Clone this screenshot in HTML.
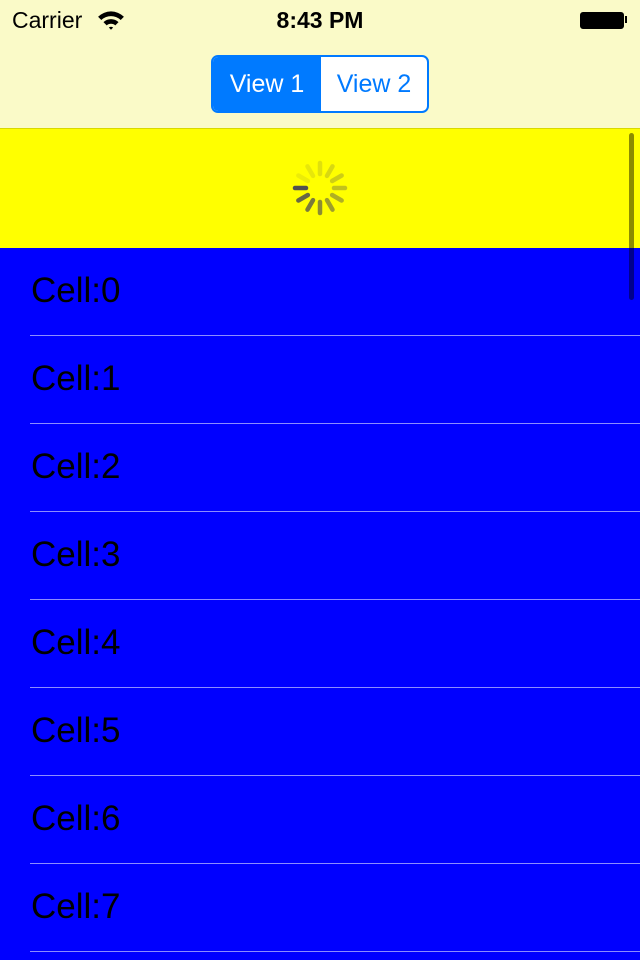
<!DOCTYPE html>
<html><head><style>
body{margin:0;width:640px;height:960px;overflow:hidden;font-family:"Liberation Sans",sans-serif;background:#0000ff;position:relative}
.top{position:absolute;left:0;top:0;width:640px;height:128px;background:#fafac8;border-bottom:1px solid #d8d800}
.seg{position:absolute;left:211px;top:55px;width:214px;height:54px;border:2px solid #007aff;border-radius:7px;background:#fff;overflow:hidden;font-size:25px}
.seg .a{position:absolute;left:0;top:0;width:108px;height:54px;background:#007aff;color:#fff;text-align:center;line-height:54px}
.seg .b{position:absolute;left:108px;top:0;width:106px;height:54px;color:#007aff;text-align:center;line-height:54px}
.yel{position:absolute;left:0;top:129px;width:640px;height:119px;background:#ffff00}
.cell{position:absolute;left:0;width:640px;height:88px}
.cell span{position:absolute;left:31px;top:23px;font-size:35px;color:#000}
.cell i{position:absolute;left:30px;right:0;bottom:0;height:1px;background:#8c8cff}
</style></head><body>
<div class="top">
<div style="position:absolute;left:12px;top:7px;font-size:23px">Carrier</div>
<svg style="position:absolute;left:97px;top:9px" width="28" height="22" viewBox="0 0 26 20"><path d="M1 7 A17 17 0 0 1 25 7 L22 10 A13 13 0 0 0 4 10Z M6 12 A10 10 0 0 1 20 12 L17 15 A6 6 0 0 0 9 15Z M11 17 A3 3 0 0 1 15 17 L13 19Z" fill="#000"/></svg>
<div style="position:absolute;left:0;width:640px;top:7px;text-align:center;font-size:23px;font-weight:bold">8:43 PM</div>
<div style="position:absolute;left:580px;top:12px;width:42px;height:15px;border:1px solid #000;border-radius:3px;background:#000"></div>
<div style="position:absolute;left:625px;top:16px;width:2px;height:7px;background:#000"></div>
<div class="seg"><div class="a">View 1</div><div class="b">View 2</div></div>
</div>
<div class="yel">
<svg style="position:absolute;left:285px;top:24px" width="70" height="70" viewBox="-35 -35 70 70">
<g stroke="#505050" stroke-width="4.5" stroke-linecap="round">
<line x1="-14" y1="0" x2="-25" y2="0" opacity="1" transform="rotate(0)"/>
<line x1="-14" y1="0" x2="-25" y2="0" opacity="0.85" transform="rotate(-30)"/>
<line x1="-14" y1="0" x2="-25" y2="0" opacity="0.75" transform="rotate(-60)"/>
<line x1="-14" y1="0" x2="-25" y2="0" opacity="0.65" transform="rotate(-90)"/>
<line x1="-14" y1="0" x2="-25" y2="0" opacity="0.55" transform="rotate(-120)"/>
<line x1="-14" y1="0" x2="-25" y2="0" opacity="0.45" transform="rotate(-150)"/>
<line x1="-14" y1="0" x2="-25" y2="0" opacity="0.35" transform="rotate(-180)"/>
<line x1="-14" y1="0" x2="-25" y2="0" opacity="0.28" transform="rotate(-210)"/>
<line x1="-14" y1="0" x2="-25" y2="0" opacity="0.22" transform="rotate(-240)"/>
<line x1="-14" y1="0" x2="-25" y2="0" opacity="0.17" transform="rotate(-270)"/>
<line x1="-14" y1="0" x2="-25" y2="0" opacity="0.13" transform="rotate(-300)"/>
<line x1="-14" y1="0" x2="-25" y2="0" opacity="0.1" transform="rotate(-330)"/>
</g></svg>
</div>
<div class="cell" style="top:248px"><span>Cell:0</span><i></i></div>
<div class="cell" style="top:336px"><span>Cell:1</span><i></i></div>
<div class="cell" style="top:424px"><span>Cell:2</span><i></i></div>
<div class="cell" style="top:512px"><span>Cell:3</span><i></i></div>
<div class="cell" style="top:600px"><span>Cell:4</span><i></i></div>
<div class="cell" style="top:688px"><span>Cell:5</span><i></i></div>
<div class="cell" style="top:776px"><span>Cell:6</span><i></i></div>
<div class="cell" style="top:864px"><span>Cell:7</span><i></i></div>
<div style="position:absolute;left:629px;top:133px;width:5px;height:167px;border-radius:3px;background:rgba(0,0,0,0.45)"></div>
</body></html>
